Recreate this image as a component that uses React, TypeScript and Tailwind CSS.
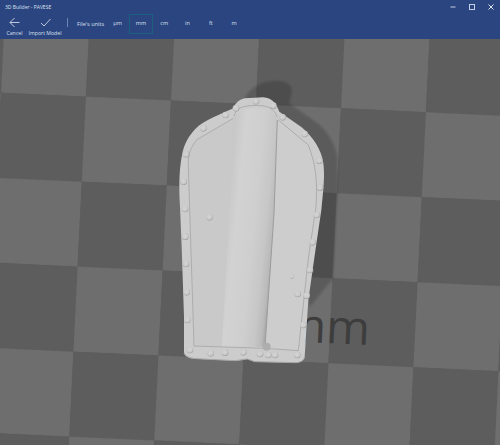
import React from "react";

const light = "#6e6e6e";
const dark = "#5d5d5d";

function Floor() {
  const tiles: React.ReactNode[] = [];
  const vx = (i: number, j: number) => 258 + 255 * i - 12.5 * (j - 1);
  const vy = (i: number, j: number) => 170 + 255 * (j - 1) + 11.7 * i;
  for (let i = -2; i < 6; i++) {
    for (let j = -1; j < 7; j++) {
      const pts = [
        [vx(i, j), vy(i, j)],
        [vx(i + 1, j), vy(i + 1, j)],
        [vx(i + 1, j + 1), vy(i + 1, j + 1)],
        [vx(i, j + 1), vy(i, j + 1)],
      ]
        .map((p) => p.join(","))
        .join(" ");
      const isDark = (((i + j) % 2) + 2) % 2 === 1;
      tiles.push(<polygon key={`${i}-${j}`} points={pts} fill={isDark ? light : dark} stroke={isDark ? light : dark} strokeWidth="0.5" />);
    }
  }
  return <g>{tiles}</g>;
}

const outline =
  "M700 205 C705 190 718 178 735 175 L790 172 C815 174 828 188 838 215 L905 262 C940 292 965 330 970 370 C975 410 970 450 964 510 L945 640 L925 780 L914 950 C912 962 900 968 885 968 L765 965 C755 965 750 958 742 957 C735 957 722 962 705 962 L585 956 C565 955 552 948 552 935 L552 830 L545 620 L540 500 C536 430 538 380 548 335 C555 310 565 290 585 268 C600 252 620 242 640 232 Z";

const rivets: [number, number, number?][] = [
  [768, 184], [820, 197], [848, 232], [914, 282], [958, 362], [960, 443], [950, 525], [938, 607],
  [930, 690], [920, 767], [910, 855], [892, 945], [825, 945], [805, 945], [780, 942], [730, 937],
  [675, 938], [632, 940], [570, 930], [562, 840], [560, 757], [558, 672], [556, 590], [555, 507],
  [551, 425], [558, 343], [610, 265], [677, 225], [708, 205], [893, 762], [628, 532], [876, 710, 6],
];

function Scene() {
  return (
    <svg viewBox="0 -3 1500 1218" className="block h-[406px] w-[500px]">
      <defs>
        <linearGradient id="ridge" gradientUnits="userSpaceOnUse" x1="675" y1="560" x2="825" y2="575">
          <stop offset="0" stopColor="#c8c8c8" />
          <stop offset="0.2" stopColor="#d2d2d2" />
          <stop offset="0.55" stopColor="#cfcfcf" />
          <stop offset="0.8" stopColor="#c7c7c7" />
          <stop offset="0.95" stopColor="#bababa" />
          <stop offset="1" stopColor="#ababab" />
        </linearGradient>
        <radialGradient id="rivet" cx="0.45" cy="0.4" r="0.6">
          <stop offset="0" stopColor="#d4d4d4" />
          <stop offset="0.65" stopColor="#cbcbcb" />
          <stop offset="1" stopColor="#a0a0a0" />
        </radialGradient>
        <filter id="soft" x="-5%" y="-5%" width="110%" height="110%" colorInterpolationFilters="sRGB">
          <feGaussianBlur stdDeviation="1.8" />
        </filter>
        <filter id="softer" x="-5%" y="-5%" width="110%" height="110%" colorInterpolationFilters="sRGB">
          <feGaussianBlur stdDeviation="3" />
        </filter>
      </defs>
      <Floor />
      <path
        d="M735 170 C760 135 790 122 830 122 C860 122 878 135 876 155 L868 190 L960 255 C990 285 1010 320 1012 360 L1012 470 L1000 715 L930 800 L800 300 Z"
        fill="#000"
        opacity="0.16"
        filter="url(#softer)"
      />
      <text
        x="845"
        y="903"
        fontSize="142"
        fill="#3d3d3d"
        fontFamily="'Open Sans','Noto Sans',sans-serif"
        transform="rotate(2.6 845 903)"
      >
        mm
      </text>
      <g filter="url(#soft)">
        <path d={outline} fill="#cccccc" />
        <path
          d="M700 235 L592 298 C572 320 563 345 565 380 L582 918 L795 925 L895 932 L925 655 L948 500 C952 430 950 380 925 315 L835 240 Z"
          fill="#cdcdcd"
        />
        <path
          d="M700 235 L592 298 C572 320 563 345 565 380 L582 918 L672 922 Z"
          fill="#c9c9c9"
        />
        <path
          d="M695 240 C708 215 730 205 770 205 C805 205 825 215 832 240 L822 520 L795 920 L665 922 L690 500 Z"
          fill="url(#ridge)"
        />
        <path d="M832 240 L822 520 L795 920" fill="none" stroke="#9c9c9c" strokeWidth="3" />
        <path
          d="M700 235 L592 298 C572 320 563 345 565 380 L582 918 L795 925 M835 240 L925 315 C950 380 952 430 948 500 L925 655 L895 932 L795 925 M702 228 C708 205 725 197 770 196 C805 197 822 205 832 232"
          fill="none"
          stroke="#adadad"
          strokeWidth="3"
        />
        <path
          d="M552 940 C560 952 575 955 590 956 L705 962 L742 957 L765 965 L885 968 C900 968 912 962 914 950"
          fill="none"
          stroke="#a6a6a6"
          strokeWidth="3"
        />
        <circle cx="800" cy="920" r="12" fill="#aeaeae" />
        {rivets.map(([x, y, r], k) => (
          <circle key={k} cx={x} cy={y} r={r ?? 10} fill="url(#rivet)" />
        ))}
      </g>
    </svg>
  );
}

const units = ["µm", "mm", "cm", "in", "ft", "m"];

export default function App() {
  return (
    <div
      className="flex h-[445px] w-[500px] flex-col overflow-hidden bg-[#5d5d5d] text-[#dbe2f0]"
      style={{ fontFamily: "'Open Sans','Noto Sans',sans-serif" }}
    >
      <header className="flex h-[39px] shrink-0 flex-col bg-[#2b4580]">
        <div className="flex h-[14px] items-center justify-between pl-[5px]">
          <span className="text-[5px] leading-none">3D Builder - PAVESE</span>
          <div className="flex items-center">
            <span className="flex w-[19px] justify-center">
              <svg width="6" height="6" viewBox="0 0 6 6"><path d="M0.5 3H5.5" stroke="#c5cfe3" /></svg>
            </span>
            <span className="flex w-[19px] justify-center">
              <svg width="6" height="6" viewBox="0 0 6 6"><rect x="0.5" y="0.5" width="5" height="5" fill="none" stroke="#c5cfe3" /></svg>
            </span>
            <span className="flex w-[19px] justify-center">
              <svg width="6" height="6" viewBox="0 0 6 6"><path d="M0.5 0.5L5.5 5.5M5.5 0.5L0.5 5.5" stroke="#e1e6f1" /></svg>
            </span>
          </div>
        </div>
        <div className="flex items-start">
          <button className="ml-[2px] flex w-[25px] flex-col items-center">
            <svg width="11" height="11" viewBox="0 0 11 11" className="mt-[3px]">
              <path d="M1 5.5H10.5M5.5 1L1 5.5L5.5 10" fill="none" stroke="#e6eaf4" strokeWidth="0.8" />
            </svg>
            <span className="mt-[1px] text-[5.2px] leading-[8px]">Cancel</span>
          </button>
          <button className="ml-[1px] flex w-[34px] flex-col items-center">
            <svg width="11" height="11" viewBox="0 0 11 11" className="mt-[3px]">
              <path d="M1 6L4 9L10.5 2" fill="none" stroke="#e6eaf4" strokeWidth="0.8" />
            </svg>
            <span className="mt-[1px] whitespace-nowrap text-[5.2px] leading-[8px]">Import Model</span>
          </button>
          <span className="ml-[5px] mt-[4px] h-[9px] w-px bg-[#6f84b2]" />
          <span className="ml-[9px] mt-[5px] w-[29px] whitespace-nowrap text-[5.6px] leading-[10px]">File's units</span>
          <div className="flex items-start">
            {units.map((u) => (
              <span
                key={u}
                className={
                  "flex h-[20px] w-[23.3px] items-center justify-center text-[5.6px] leading-none " +
                  (u === "mm" ? "border border-[#1c6080]" : "")
                }
              >
                {u}
              </span>
            ))}
          </div>
        </div>
      </header>
      <Scene />
    </div>
  );
}
